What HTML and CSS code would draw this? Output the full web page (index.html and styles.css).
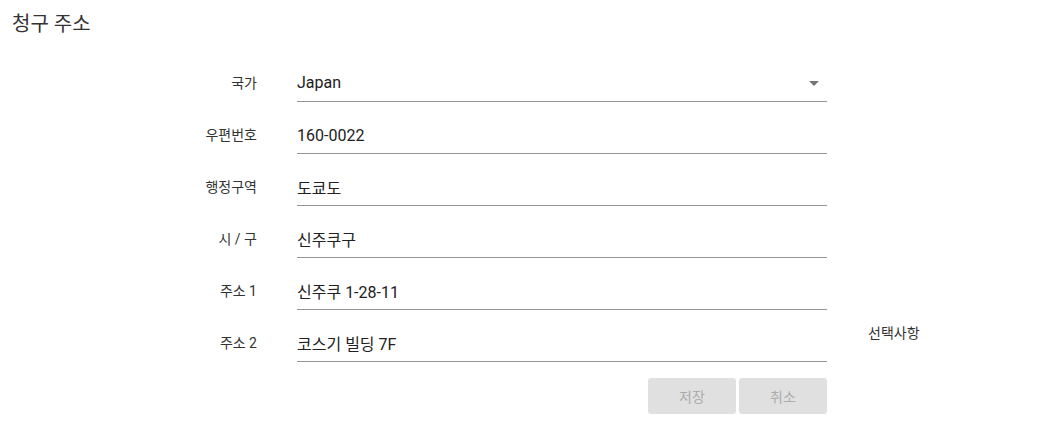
FILE: index.html
```html
<!DOCTYPE html>
<html lang="ko">
<head>
    <meta charset="UTF-8">
    <meta name="viewport" content="width=device-width, initial-scale=1.0">
    <title>청구 주소</title>
    <link rel="stylesheet" href="styles.css">
</head>
<body>

    <h2 class="title">청구 주소</h2>

    <form id="addressForm" class="address-form">
        <div class="form-row">
            <label for="country">국가</label>
            <div class="field select-field">
                <select id="country" name="country">
                    <option>Japan</option>
                </select>
                <span class="arrow"></span>
            </div>
        </div>

        <div class="form-row">
            <label for="zip">우편번호</label>
            <div class="field"><input type="text" id="zip" name="zip" value="160-0022"></div>
        </div>

        <div class="form-row">
            <label for="region">행정구역</label>
            <div class="field"><input type="text" id="region" name="region" value="도쿄도"></div>
        </div>

        <div class="form-row">
            <label for="city">시 / 구</label>
            <div class="field"><input type="text" id="city" name="city" value="신주쿠구"></div>
        </div>

        <div class="form-row">
            <label for="address1">주소 1</label>
            <div class="field"><input type="text" id="address1" name="address1" value="신주쿠 1-28-11"></div>
        </div>

        <div class="form-row">
            <label for="address2">주소 2</label>
            <div class="field"><input type="text" id="address2" name="address2" value="코스기 빌딩 7F"></div>
            <span class="hint">선택사항</span>
        </div>

        <div class="form-row">
            <span></span>
            <div class="actions">
                <button type="submit" disabled>저장</button>
                <button type="button" disabled>취소</button>
            </div>
        </div>
    </form>

</body>
</html>
```

FILE: styles.css
```css
body {
    font-family: Roboto, "Noto Sans CJK KR", sans-serif;
    background-color: #ffffff;
    color: #333;
    margin: 0;
    padding: 0;
}

.title {
    margin: 0;
    padding: 12px 0 14px 12px;
    font-size: 20px;
    line-height: 24px;
    font-weight: 400;
    color: #333;
}

.form-row {
    display: grid;
    grid-template-columns: 257px 530px auto;
    column-gap: 40px;
}

.form-row label {
    text-align: right;
    font-size: 14px;
    line-height: 18px;
    padding-top: 24px;
    color: #333;
}

.field {
    position: relative;
    border-bottom: 1px solid #949494;
    height: 51px;
    box-sizing: content-box;
}

.field input,
.field select {
    display: block;
    width: 100%;
    box-sizing: border-box;
    border: none;
    outline: none;
    background: transparent;
    padding: 23px 0 8px 0;
    margin: 0;
    font-family: Roboto, "Noto Sans CJK KR", sans-serif;
    font-size: 16px;
    line-height: 20px;
    height: 51px;
    color: #212121;
}

.field select {
    appearance: none;
    -webkit-appearance: none;
}

.arrow {
    position: absolute;
    right: 8px;
    top: 31px;
    width: 0;
    height: 0;
    border-left: 5px solid transparent;
    border-right: 5px solid transparent;
    border-top: 5px solid #757575;
}

.hint {
    font-size: 14px;
    line-height: 18px;
    padding-top: 14px;
    margin-left: 1px;
    color: #333;
}

.actions {
    display: flex;
    justify-content: flex-end;
    gap: 3px;
    margin-top: 16px;
}

.actions button {
    width: 88px;
    height: 36px;
    border: none;
    border-radius: 3px;
    background-color: #e0e0e0;
    color: #acacac;
    font-family: Roboto, "Noto Sans CJK KR", sans-serif;
    font-size: 14px;
    padding: 0;
}
```
